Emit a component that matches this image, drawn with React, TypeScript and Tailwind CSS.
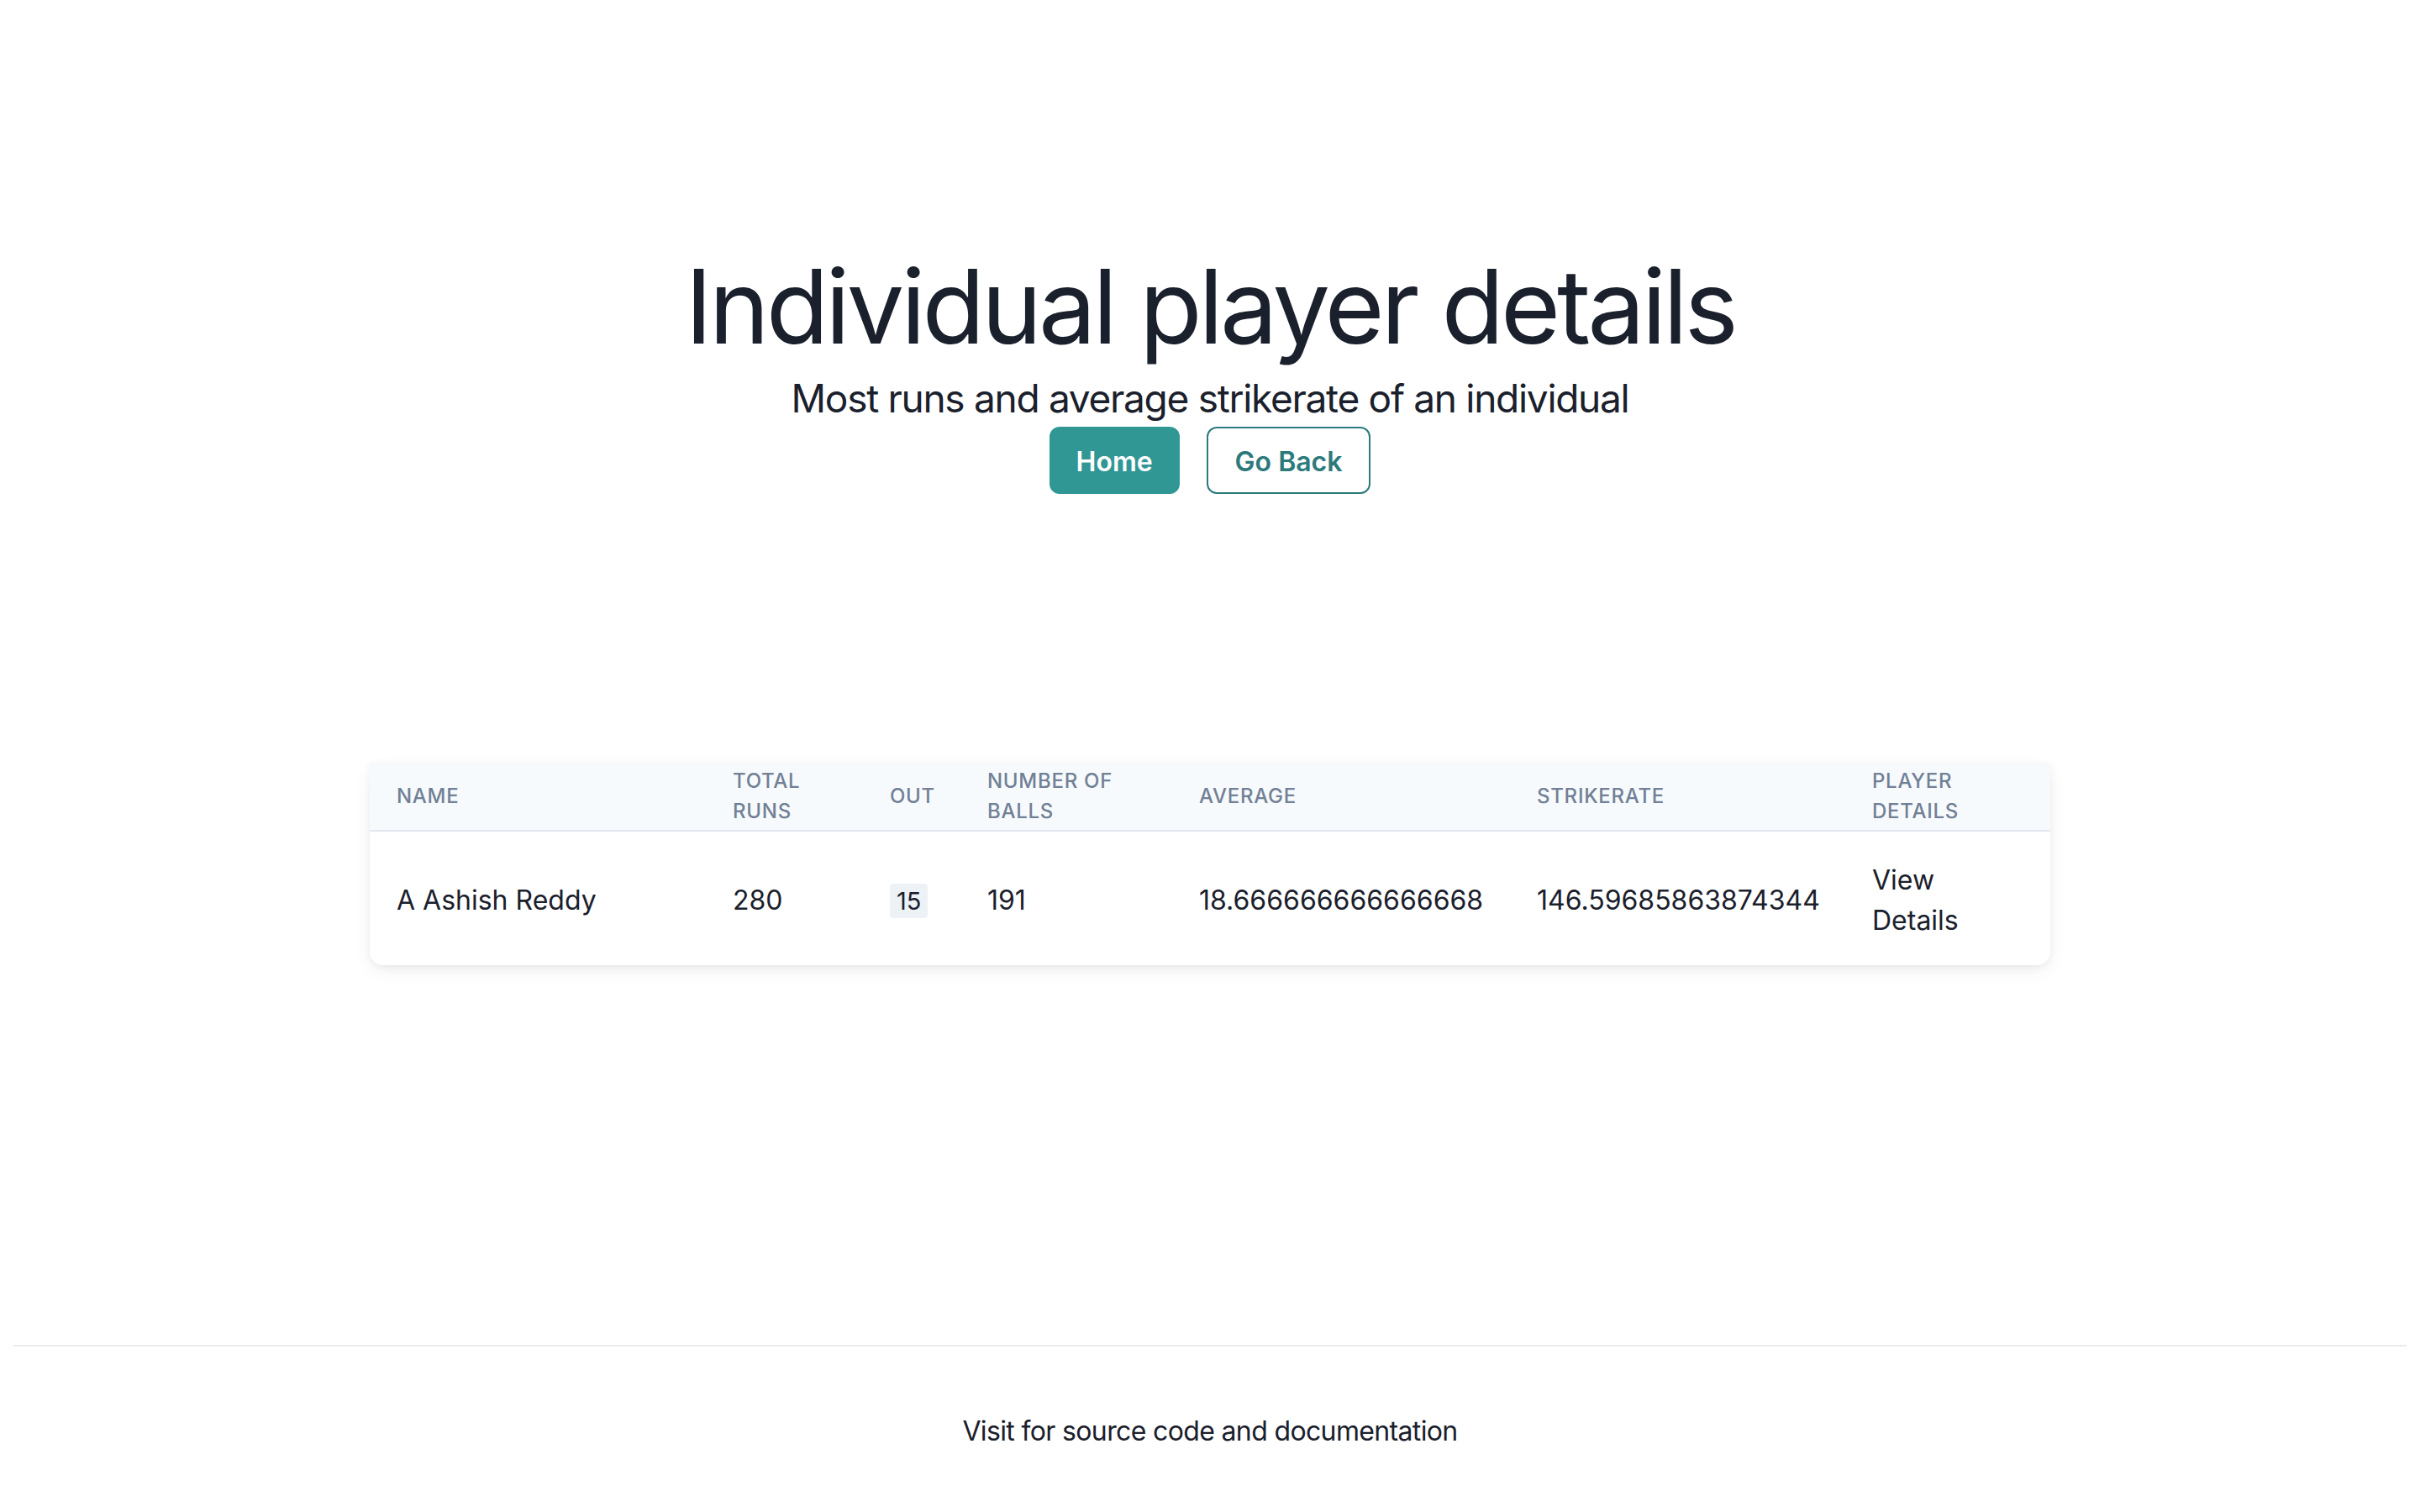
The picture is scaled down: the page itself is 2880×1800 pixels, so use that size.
import React from "react";

const headers = [
  { label: "Name", w: "w-[400px]" },
  { label: "Total Runs", w: "w-[187px]" },
  { label: "Out", w: "w-[116px]" },
  { label: "Number of Balls", w: "w-[252px]" },
  { label: "Average", w: "w-[402px]" },
  { label: "Strikerate", w: "w-[399px]" },
  { label: "Player Details", w: "w-[244px]" },
];

const td = "px-[32px] pt-[34px] pb-[29px] align-middle";

export default function App() {
  return (
    <div
      className="min-h-screen bg-white text-[#1a202c] flex flex-col"
      style={{ fontFamily: "Inter, 'Noto Sans', 'Liberation Sans', sans-serif" }}
    >
      <main className="flex flex-col items-center pt-[290px]">
        <h1 className="text-[122px] leading-[150px] font-normal tracking-[-0.034em] text-[#1a202c]">
          Individual player details
        </h1>
        <p className="text-[46px] leading-[68px] tracking-[-0.028em] text-[#1a202c]">
          Most runs and average strikerate of an individual
        </p>
        <div className="flex gap-[32px]">
          <button className="h-[80px] px-[32px] pt-[3px] rounded-[12px] bg-[#319795] text-white text-[32px] font-semibold">
            Home
          </button>
          <button className="h-[80px] px-[32px] pt-[3px] rounded-[12px] border-2 border-[#2c7a7b] bg-white text-[#2c7a7b] text-[32px] font-semibold">
            Go Back
          </button>
        </div>

        <div className="mt-[320px] w-[2000px] rounded-b-[16px] bg-white shadow-[0_8px_24px_-4px_rgba(0,0,0,0.08),0_2px_10px_0_rgba(0,0,0,0.05)]">
          <table className="w-full table-fixed border-collapse">
            <thead>
              <tr className="bg-[#f7fafc] border-b-2 border-[#e2e8f0]">
                {headers.map((h) => (
                  <th
                    key={h.label}
                    className={`${h.w} px-[32px] py-[4px] text-left align-middle text-[24px] leading-[36px] font-medium uppercase tracking-[0.03em] text-[#718096]`}
                  >
                    {h.label}
                  </th>
                ))}
              </tr>
            </thead>
            <tbody>
              <tr className="text-[32px] leading-[48px] text-[#1a202c]">
                <td className={td}>A Ashish Reddy</td>
                <td className={td}>280</td>
                <td className={td}>
                  <span className="inline-block bg-[#edf2f7] rounded-[4px] px-[8px] text-[29px] leading-[41px]">
                    15
                  </span>
                </td>
                <td className={td}>191</td>
                <td className={td}>18.666666666666668</td>
                <td className={td}>146.59685863874344</td>
                <td className={td}>
                  <a className="cursor-pointer">View Details</a>
                </td>
              </tr>
            </tbody>
          </table>
        </div>
      </main>

      <footer className="mt-[452px] mx-[16px] border-t-2 border-[#ebebeb] pt-[77px] pb-[73px] text-center">
        <p className="text-[32px] leading-[48px] tracking-[-0.02em] text-[#1a202c]">
          Visit for source code and documentation
        </p>
      </footer>
    </div>
  );
}
